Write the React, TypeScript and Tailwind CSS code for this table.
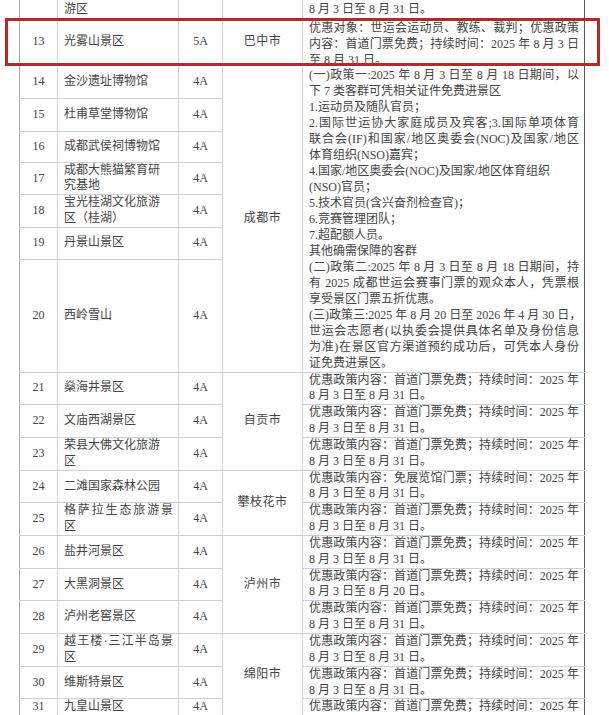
type Line = string | { t: string; j: true }

const J = (t: string): Line => ({ t, j: true })

type Row = {
  h: string
  no: string
  name: Line[]
  level: string
  city?: { text: string; span: number }
  desc?: { lines: Line[]; span: number; lead?: string; box?: string }
}

const std = (end = '31'): Line[] => [
  J('优惠政策内容：首道门票免费；持续时间：2025 年'),
  `8 月 3 日至 8 月 ${end} 日。`,
]

const chengdu: Line[] = [
  J('(一)政策一:2025 年 8 月 3 日至 8 月 18 日期间，以'),
  '下 7 类客群可凭相关证件免费进景区',
  '1.运动员及随队官员；',
  J('2.国际世运协大家庭成员及宾客;3.国际单项体育'),
  J('联合会(IF)和国家/地区奥委会(NOC)及国家/地区'),
  '体育组织(NSO)嘉宾；',
  '4.国家/地区奥委会(NOC)及国家/地区体育组织',
  '(NSO)官员；',
  '5.技术官员(含兴奋剂检查官)；',
  '6.竞赛管理团队；',
  '7.超配额人员。',
  '其他确需保障的客群',
  J('(二)政策二:2025 年 8 月 3 日至 8 月 18 日期间，持'),
  J('有 2025 成都世运会赛事门票的观众本人，凭票根'),
  '享受景区门票五折优惠。',
  J('(三)政策三:2025 年 8 月 20 日至 2026 年 4 月 30 日，'),
  J('世运会志愿者(以执委会提供具体名单及身份信息'),
  J('为准)在景区官方渠道预约成功后，可凭本人身份'),
  '证免费进景区。',
]

const rows: Row[] = [
  { h: 'h-[32.7px]', no: '', name: ['恩阳古镇旅', '游区'], level: '', city: { text: '', span: 1 }, desc: { lines: std(), span: 1 } },
  {
    h: 'h-[47px]', no: '13', name: ['光雾山景区'], level: '5A', city: { text: '巴中市', span: 1 },
    desc: {
      span: 1,
      lead: 'leading-[16px]',
      box: 'h-[46px] pt-[1px]',
      lines: [
        J('优惠对象：世运会运动员、教练、裁判；优惠政策'),
        J('内容：首道门票免费；持续时间：2025 年 8 月 3 日'),
        '至 8 月 31 日。',
      ],
    },
  },
  { h: 'h-[33px]', no: '14', name: ['金沙遗址博物馆'], level: '4A', city: { text: '成都市', span: 7 }, desc: { lines: chengdu, span: 7, lead: 'leading-[16px]' } },
  { h: 'h-[33px]', no: '15', name: ['杜甫草堂博物馆'], level: '4A' },
  { h: 'h-[31px]', no: '16', name: ['成都武侯祠博物馆'], level: '4A' },
  { h: 'h-[32px]', no: '17', name: ['成都大熊猫繁育研', '究基地'], level: '4A' },
  { h: 'h-[32px]', no: '18', name: ['宝光桂湖文化旅游', '区（桂湖）'], level: '4A' },
  { h: 'h-[32px]', no: '19', name: ['丹景山景区'], level: '4A' },
  { h: 'h-[113px]', no: '20', name: ['西岭雪山'], level: '4A' },
  { h: 'h-[32.7px]', no: '21', name: ['燊海井景区'], level: '4A', city: { text: '自贡市', span: 3 }, desc: { lines: std(), span: 1 } },
  { h: 'h-[32.7px]', no: '22', name: ['文庙西湖景区'], level: '4A', desc: { lines: std(), span: 1 } },
  { h: 'h-[32.7px]', no: '23', name: ['荣县大佛文化旅游', '区'], level: '4A', desc: { lines: std(), span: 1 } },
  {
    h: 'h-[32.7px]', no: '24', name: ['二滩国家森林公园'], level: '4A', city: { text: '攀枝花市', span: 2 },
    desc: { lines: [J('优惠政策内容：免展览馆门票；持续时间：2025 年'), '8 月 3 日至 8 月 31 日。'], span: 1 },
  },
  { h: 'h-[32.7px]', no: '25', name: [J('格萨拉生态旅游景'), '区'], level: '4A', desc: { lines: std(), span: 1 } },
  { h: 'h-[32.7px]', no: '26', name: ['盐井河景区'], level: '4A', city: { text: '泸州市', span: 3 }, desc: { lines: std(), span: 1 } },
  { h: 'h-[32.7px]', no: '27', name: ['大黑洞景区'], level: '4A', desc: { lines: std('20'), span: 1 } },
  { h: 'h-[32.7px]', no: '28', name: ['泸州老窖景区'], level: '4A', desc: { lines: std(), span: 1 } },
  { h: 'h-[32.7px]', no: '29', name: [J('越王楼·三江半岛景'), '区'], level: '4A', city: { text: '绵阳市', span: 3 }, desc: { lines: std(), span: 1 } },
  { h: 'h-[32.7px]', no: '30', name: ['维斯特景区'], level: '4A', desc: { lines: std(), span: 1 } },
  { h: 'h-[16.5px]', no: '31', name: ['九皇山景区'], level: '4A', desc: { lines: [J('优惠政策内容：首道门票免费；持续时间：2025 年')], span: 1 } },
]

function Lines({ lines }: { lines: Line[] }) {
  return (
    <>
      {lines.map((l, i) =>
        typeof l === 'string' ? (
          <div key={i} className="whitespace-nowrap">{l}</div>
        ) : (
          <div key={i} className="whitespace-nowrap text-justify [text-align-last:justify]">{l.t}</div>
        ),
      )}
    </>
  )
}

const cell = 'border border-[#cbd1d8] p-0 align-middle'

export default function App() {
  return (
    <div className="relative w-[609px] h-[715px] overflow-hidden bg-white font-['Liberation_Serif','Noto_Sans_CJK_SC',serif] text-[12px] leading-[15.7px] text-[#444]">
      <table className="ml-[19px] mt-[-15px] w-[565px] table-fixed border-collapse">
        <colgroup>
          <col className="w-[38px]" />
          <col className="w-[121px]" />
          <col className="w-[44px]" />
          <col className="w-[80px]" />
          <col className="w-[282px]" />
        </colgroup>
        <tbody>
          {rows.map((r, i) => (
            <tr key={i} className={r.h}>
              <td className={`${cell} border-l-[#a5aab0] text-center`}>{r.no}</td>
              <td className={`${cell} pl-[6px] pr-[5px]`}>
                <Lines lines={r.name} />
              </td>
              <td className={`${cell} text-center`}>{r.level}</td>
              {r.city && (
                <td rowSpan={r.city.span} className={`${cell} text-center tracking-[0.5px]`}>
                  {r.city.text}
                </td>
              )}
              {r.desc && (
                <td rowSpan={r.desc.span} className={`${cell} border-r-[#5a5a5a] pl-[6px] pr-[5px] ${r.desc.lead ?? ''}`}>
                  <div className={r.desc.box ?? ''}>
                    <Lines lines={r.desc.lines} />
                  </div>
                </td>
              )}
            </tr>
          ))}
        </tbody>
      </table>

      {/* highlight frame over row 13 */}
      <div className="absolute left-[5px] top-[18px] w-[595px] h-[48px] border-[3px] border-[#b02c2c]" />
    </div>
  )
}
